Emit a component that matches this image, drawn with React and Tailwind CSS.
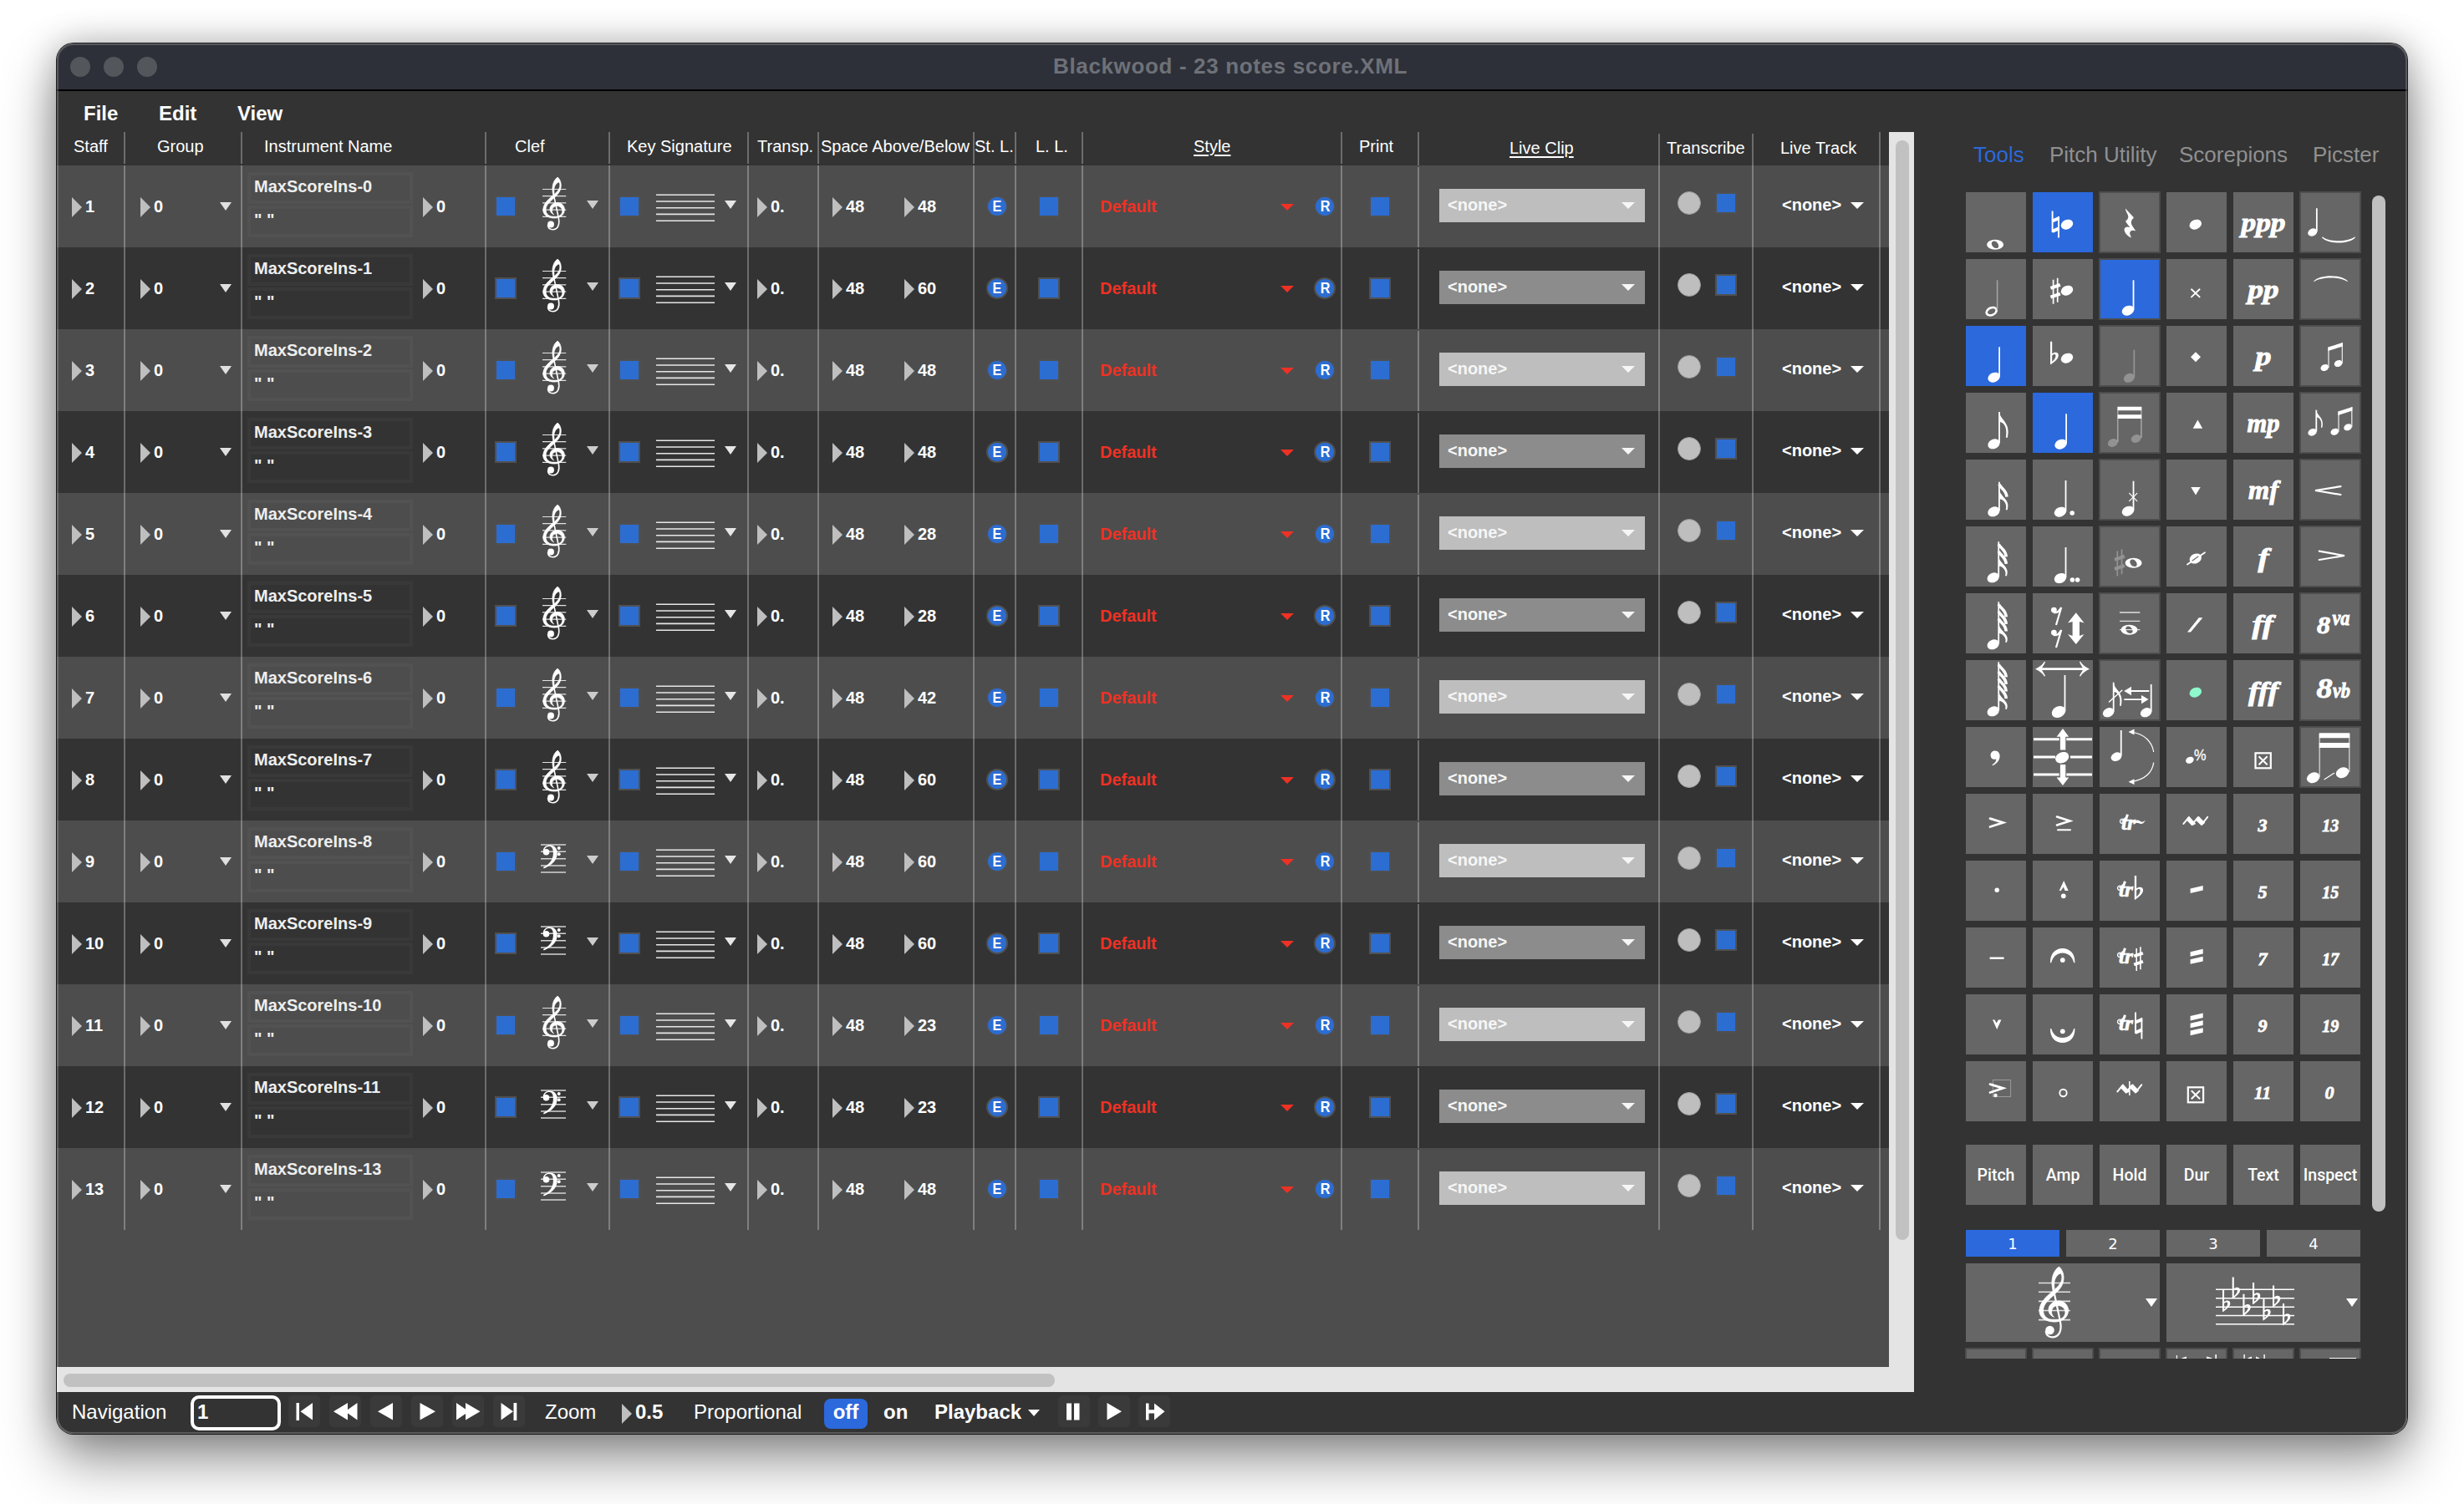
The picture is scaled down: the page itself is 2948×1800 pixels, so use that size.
import React from "react";

/* ---------- table pieces ---------- */

const COLS =
  "grid grid-cols-[80px_140px_292px_148px_166px_84px_186px_50px_80px_310px_92px_288px_112px_152px_12px]";

const Tri = ({ className = "" }) => (
  <svg viewBox="0 0 12 24" className={"h-6 w-3 shrink-0 " + className}>
    <path d="M0 0L12 12L0 24Z" fill="#bfbfbf" />
  </svg>
);

const Down = ({ className = "", w = 14, h = 10 }) => (
  <svg viewBox={`0 0 ${w} ${h}`} width={w} height={h} className={"shrink-0 " + className}>
    <path d={`M0 0H${w}L${w / 2} ${h}Z`} fill="currentColor" />
  </svg>
);

const Num = ({ className = "", children }) => (
  <span className={"shrink-0 whitespace-nowrap text-[20px]/[20px] font-bold " + className}>{children}</span>
);

const Cell = ({ first, lineClass = "h-full", children }) => (
  <div className="flex h-full items-start">
    {!first && <div className={"w-[2px] shrink-0 bg-white/28 " + lineClass} />}
    {children}
  </div>
);

const Box = ({ className = "" }) => (
  <div className={"size-[26px] shrink-0 border-2 border-[#505050] bg-[#2c6dd2] " + className} />
);

const Badge = ({ className = "", children }) => (
  <div
    className={
      "flex size-[26px] shrink-0 items-center justify-center rounded-full border-2 border-[#505050] bg-[#2c6dd2] text-[18px]/[20px] font-bold " +
      className
    }
  >
    <span className="scale-x-90">{children}</span>
  </div>
);

const TREBLE =
  "M17.2 29C9 36 1 43 1 53C1 61 9 66 19 66C29 66 35.5 60.5 35.5 52C35.5 45.5 30 41 24 41C17 41 12 46 12 51.5C12 56 15 59 18.5 60.3C16 58 15.5 56 15.5 54C15.5 49.5 19 46.5 23 46.5C27.5 46.5 32 49.5 32 54.5C32 60.5 26 64 20 64C11 64 5.5 59.5 5.5 52.5C5.5 46 10 41.5 17 35C24 28.5 30 23 30 13C30 8 28 3 24.5 0C18.5 4 16 12 16 19C16 23 16.6 26 17.2 29ZM26.5 8C22 9 18.6 15 18.6 21C18.6 23.5 18.8 25.5 19.2 27.5C24 23 28 19 28 13C28 10.5 27.5 9 26.5 8Z";

const Treble = ({ w, h, className = "" }) => (
  <svg viewBox="0 0 39 86" width={w} height={h} className={"shrink-0 " + className} fill="#fff">
    <path d="M0 19.5H38M0 30.3H38M0 41.4H38M0 52.5H38M0 63.6H38" stroke="#e2e2e2" strokeWidth="1.6" />
    <path d={TREBLE} fillRule="evenodd" stroke="#fff" strokeWidth="0.9" />
    <path d="M18 28L26 66C28 76 25 84 17 84.3C12 84.4 9 81.5 8.7 77" fill="none" stroke="#fff" strokeWidth="2.2" />
    <circle cx="13.5" cy="76" r="5.3" />
  </svg>
);

const Bass = ({ className = "" }) => (
  <svg viewBox="0 0 30 36" width="30" height="36" className={"shrink-0 " + className} fill="#fff">
    <path d="M0 1H30M0 9.3H30M0 17.7H30M0 26H30M0 34H30" stroke="#d4d4d4" strokeWidth="1.5" />
    <circle cx="6.5" cy="9.7" r="3.8" />
    <path d="M2.7 9C2.7 4 6.5 1.5 11 1.5C16.5 1.5 19.7 5.5 19.7 11C19.7 20 12.5 26 3.6 29.4L3 28C10 24.5 14.9 19 14.9 11C14.9 6 13.5 3 10.3 3C7 3 4.6 5 4.2 8.5Z" />
    <circle cx="21.7" cy="5" r="2" />
    <circle cx="21.7" cy="12.3" r="2" />
  </svg>
);

const Staff5 = ({ className = "" }) => (
  <svg viewBox="0 0 70 34" width="70" height="34" className={"shrink-0 " + className}>
    <path d="M0 1.2H70M0 9H70M0 16.7H70M0 24.4H70M0 32.2H70" stroke="#e6e6e6" strokeWidth="1.6" />
  </svg>
);

const Heading = ({ className, children }) => (
  <span className={"shrink-0 whitespace-nowrap text-[20px]/[20px] " + className}>{children}</span>
);

const HL = "h-[38px]";

const Header = () => (
  <div className={COLS + " h-10"}>
    <Cell first><Heading className="ml-[20px] mt-[7px]">Staff</Heading></Cell>
    <Cell lineClass={HL}><Heading className="ml-[38px] mt-[7px]">Group</Heading></Cell>
    <Cell lineClass={HL}><Heading className="ml-[26px] mt-[7px]">Instrument Name</Heading></Cell>
    <Cell lineClass={HL}><Heading className="ml-[34px] mt-[7px]">Clef</Heading></Cell>
    <Cell lineClass={HL}><Heading className="ml-[20px] mt-[7px]">Key Signature</Heading></Cell>
    <Cell lineClass={HL}><Heading className="ml-[10px] mt-[7px]">Transp.</Heading></Cell>
    <Cell lineClass={HL}><Heading className="ml-[2px] mt-[7px]">Space Above/Below</Heading></Cell>
    <Cell lineClass={HL}><Heading className="mt-[7px]">St. L.</Heading></Cell>
    <Cell lineClass={HL}><Heading className="ml-[23px] mt-[7px]">L. L.</Heading></Cell>
    <Cell lineClass={HL}><Heading className="ml-[132px] mt-[7px] underline underline-offset-[3px]">Style</Heading></Cell>
    <Cell lineClass={HL}><Heading className="ml-[20px] mt-[7px]">Print</Heading></Cell>
    <Cell><Heading className="ml-[108px] mt-[9px] underline underline-offset-[3px]">Live Clip</Heading></Cell>
    <Cell lineClass="mt-[2px] h-[38px]"><Heading className="ml-[8px] mt-[9px]">Transcribe</Heading></Cell>
    <Cell lineClass="mt-[2px] h-[38px]"><Heading className="ml-[32px] mt-[9px]">Live Track</Heading></Cell>
    <Cell />
  </div>
);

const ROWS = [
  ["48", "G"], ["60", "G"], ["48", "G"], ["48", "G"], ["28", "G"], ["28", "G"], ["42", "G"],
  ["60", "G"], ["60", "F"], ["60", "F"], ["23", "G"], ["23", "F"], ["48", "F"],
];

const NAMES = [0, 1, 2, 3, 4, 5, 6, 7, 8, 9, 10, 11, 13];

const Row = ({ i, below, clef, name }) => {
  const light = i % 2 === 0;
  const field = light ? "border-[#525252]" : "border-[#393939]";
  return (
    <div className={COLS + " h-[98px] " + (light ? "bg-[#4d4d4d]" : "bg-[#333]")}>
      <Cell first>
        <Tri className="ml-[18px] mt-[38px]" />
        <Num className="ml-[4px] mt-[39px]">{i + 1}</Num>
      </Cell>
      <Cell>
        <Tri className="ml-[18px] mt-[38px]" />
        <Num className="ml-[4px] mt-[39px] w-[79px]">0</Num>
        <Down className="mt-[44px] text-[#e0e0e0]" />
      </Cell>
      <Cell>
        <div className="ml-[6px] mt-[8px] flex w-[198px] shrink-0 flex-col gap-[2px] text-[#eee]">
          <div className={"h-[38px] border-4 pl-[4px] pt-[3px] " + field}><Num className="block">{name}</Num></div>
          <div className={"h-[38px] border-4 pl-[4px] pt-[3px] " + field}><Num className="block">{'" "'}</Num></div>
        </div>
        <Tri className="ml-[12px] mt-[38px]" />
        <Num className="ml-[4px] mt-[39px]">0</Num>
      </Cell>
      <Cell>
        <Box className="ml-[10px] mt-[36px]" />
        {clef === "G" ? (
          <Treble w={29} h={64} className="ml-[31px] mt-[14px]" />
        ) : (
          <Bass className="ml-[29px] mr-[1px] mt-[28px]" />
        )}
        <Down className="ml-[24px] mt-[42px] text-[#ccc]" />
      </Cell>
      <Cell>
        <Box className="ml-[10px] mt-[36px]" />
        <Staff5 className="ml-[19px] mt-[34px]" />
        <Down className="ml-[12px] mt-[42px] text-[#e6e6e6]" />
      </Cell>
      <Cell>
        <Tri className="ml-[10px] mt-[38px]" />
        <Num className="ml-[4px] mt-[39px]">0.</Num>
      </Cell>
      <Cell>
        <Tri className="ml-[16px] mt-[38px]" />
        <Num className="ml-[4px] mt-[39px] w-[70px]">48</Num>
        <Tri className="mt-[38px]" />
        <Num className="ml-[4px] mt-[39px]">{below}</Num>
      </Cell>
      <Cell><Badge className="ml-[14px] mt-[36px]">E</Badge></Cell>
      <Cell><Box className="ml-[26px] mt-[36px]" /></Cell>
      <Cell>
        <Num className="ml-[20px] mt-[39px] w-[216px] text-[#ee3124]">Default</Num>
        <Down w={16} h={8} className="mt-[46px] text-[#ee3124]" />
        <Badge className="ml-[24px] mt-[36px]">R</Badge>
      </Cell>
      <Cell><Box className="ml-[32px] mt-[36px]" /></Cell>
      <Cell lineClass="mt-[2px] h-[96px]">
        <div
          className={
            "ml-[24px] mt-[28px] flex h-10 w-[246px] shrink-0 items-start justify-between pl-[10px] pr-[12px] text-[#f6f6f6] " +
            (light ? "bg-[#bebebe]" : "bg-[#8c8c8c]")
          }
        >
          <Num className="mt-[9px]">{"<none>"}</Num>
          <Down w={16} h={8} className="mt-[16px]" />
        </div>
      </Cell>
      <Cell>
        <div className="ml-[21px] mt-[31px] size-7 shrink-0 rounded-full border border-[#9a9a9a] bg-[#bebebe]" />
        <Box className="ml-[17px] mt-[32px]" />
      </Cell>
      <Cell>
        <Num className="ml-[34px] mt-[37px] w-[82px]">{"<none>"}</Num>
        <Down w={16} h={8} className="mt-[44px]" />
      </Cell>
      <Cell />
    </div>
  );
};

/* ---------- notation drawings, 72 x 72 tiles ---------- */

const Head = ({ x, y, r = 7.5, c = "#fff" }) => (
  <ellipse cx={x} cy={y} rx={r} ry={r * 0.76} fill={c} transform={`rotate(-25 ${x} ${y})`} />
);
const Stem = ({ x, y1, y2, c = "#fff", w = 1.8 }) => (
  <path d={`M${x} ${y1}V${y2}`} stroke={c} strokeWidth={w} />
);
const Quarter = ({ x = 33.6, y = 61.7, top = 25.3, c = "#fff", r = 7.5 }) => (
  <g>
    <Head x={x} y={y} r={r} c={c} />
    <Stem x={x + r * 0.87} y1={top} y2={y - 1} c={c} />
  </g>
);
const Whole = ({ x, y }) => (
  <path
    fillRule="evenodd"
    fill="#fff"
    d={`M${x - 10} ${y}a10 6 0 1 0 20 0a10 6 0 1 0 -20 0ZM${x - 4} ${y - 2.6}C${x - 2.5} ${y - 5.6} ${x + 2.5} ${y - 4.6} ${x + 4} ${y + 0.5}C${x + 5} ${y + 4.8} ${x + 0.5} ${y + 5.2} ${x - 2} ${y + 3.2}C${x - 4.2} ${y + 1.2} ${x - 4.8} ${y - 1} ${x - 4} ${y - 2.6}Z`}
  />
);
const Sharp = ({ x, y, c = "#fff", s = 1 }) => (
  <g transform={`translate(${x} ${y}) scale(${s})`} stroke={c} fill="none">
    <path d="M3.2 2V31M8.3 0V29" strokeWidth="1.7" />
    <path d="M0 12L11.5 8M0 22.8L11.5 18.8" strokeWidth="4" />
  </g>
);
const Natural = ({ x, y }) => (
  <g transform={`translate(${x} ${y})`} stroke="#fff" fill="none">
    <path d="M1.2 0V25.5M8.6 6.5V32" strokeWidth="1.9" />
    <path d="M1 12L9 8.6M1 24.3L9 20.9" strokeWidth="4" />
  </g>
);
const Flat = ({ x, y, s = 1 }) => (
  <path
    transform={`translate(${x} ${y}) scale(${s})`}
    fill="#fff"
    fillRule="evenodd"
    d="M0 0H2.2V14.6C4 12.6 9.8 11.8 9.8 16.5C9.8 21 5 24 0.6 27.6L0 27ZM2.2 16.8V24C5 21.6 6.5 19.5 6.5 17C6.5 14.6 3.8 14.8 2.2 16.8Z"
  />
);
const FlagNote = ({ x = 32.7, y = 61.3, top, n, r = 7.5, end }) => {
  const sx = x + r * 0.87;
  const k2 = r / 7.5;
  const flags = [];
  for (let k = 0; k < n; k++) {
    const t = top + k * 8.6;
    flags.push(
      k === n - 1 ? (
        <path
          key={k}
          fill="#fff"
          d={`M${sx} ${t}C${sx + 1 * k2} ${t + 10 * k2} ${sx + 14 * k2} ${t + 12 * k2} ${sx + 9.7 * k2} ${end}L${sx + 7.8 * k2} ${end - 0.5}C${sx + 10 * k2} ${t + 18 * k2} ${sx + 5 * k2} ${t + 12 * k2} ${sx} ${t + 12 * k2}Z`}
        />
      ) : (
        <path
          key={k}
          fill="none"
          stroke="#fff"
          strokeWidth="3.6"
          d={`M${sx} ${t + 3}C${sx + 2} ${t + 8} ${sx + 8.6} ${t + 9.5} ${sx + 9} ${t + 18}`}
        />
      )
    );
  }
  return (
    <g>
      <Quarter x={x} y={y} top={top} r={r} />
      {flags}
    </g>
  );
};
const Beam = ({ x1, y1, x2, y2, h1, h2, r = 5 }) => (
  <g>
    <Head x={x1 - r + 0.3} y={h1} r={r} />
    <Head x={x2 - r + 0.3} y={h2} r={r} />
    <path d={`M${x1} ${y1}V${h1}M${x2} ${y2}V${h2}`} stroke="#eee" strokeWidth="1.2" />
    <path d={`M${x1 - 0.6} ${y1}L${x2 + 0.6} ${y2}V${y2 + 4.6}L${x1 - 0.6} ${y1 + 4.6}Z`} fill="#fff" />
  </g>
);
const Dyn = ({ children, w, y = 46.6, size = 31, x = 36, sw = 0.9 }) => (
  <text
    x={x}
    y={y}
    textAnchor="middle"
    textLength={w}
    lengthAdjust="spacingAndGlyphs"
    fontFamily="'Liberation Serif', serif"
    fontWeight="bold"
    fontStyle="italic"
    fontSize={size}
    fill="#fff"
    stroke="#fff"
    strokeWidth={sw}
  >
    {children}
  </text>
);
const Tup = ({ children, x = 35 }) => (
  <Dyn x={x} y={45} size={21.5} w={String(children).length > 1 ? 20 : 11} sw={0.8}>{children}</Dyn>
);
const Tr = ({ x = 21 }) => (
  <g>
    <text x={x + 2} y="43.4" fontFamily="'Liberation Serif', serif" fontWeight="bold" fontStyle="italic" fontSize="26" fill="#fff" stroke="#fff" strokeWidth="0.7" textLength="17" lengthAdjust="spacingAndGlyphs">tr</text>
    <path d={`M${x + 9} 33C${x + 5} 28.5 ${x} 29.5 ${x + 0.6} 33.5C${x + 1.5} 36.4 ${x + 5} 35.4 ${x + 4} 33`} fill="none" stroke="#fff" strokeWidth="1.3" />
    <path d={`M${x + 9.5} 24.8L${x + 7} 32`} stroke="#fff" strokeWidth="3" />
  </g>
);
const Bars = ({ ys }) => <path fill="#fff" d={ys.map((y) => `M28.6 ${y + 3.4}L43.7 ${y}V${y + 5.6}L28.6 ${y + 9}Z`).join("")} />;
const L = ({ d, w = 2, c = "#fff" }) => <path d={d} fill="none" stroke={c} strokeWidth={w} strokeLinecap="round" />;
const F = ({ d, c = "#fff" }) => <path d={d} fill={c} />;
const XBox = ({ x, y }) => (
  <g fill="none" stroke="#fff">
    <rect x={x + 1} y={y + 1} width="18.3" height="18" strokeWidth="2.2" />
    <path d={`M${x + 5} ${y + 5}L${x + 15.2} ${y + 15}M${x + 15.2} ${y + 5}L${x + 5} ${y + 15}`} strokeWidth="2" />
  </g>
);
const Mord = ({ x = 19.6, y = 26.7 }) => (
  <g transform={`translate(${x} ${y})`}>
    <path d="M0.8 9.2L7 1.6M12 9L18 1.6M23 9.5L29.6 1.2" fill="none" stroke="#fff" strokeWidth="2" strokeLinecap="round" />
    <path d="M7.4 0L15.6 9.2L10.8 11.5L4 4.4ZM19 0L26.6 8L22.4 11.5L15 4.6Z" fill="#fff" />
  </g>
);
const Rest8 = ({ x, y }) => (
  <g>
    <circle cx={x + 3.4} cy={y + 3.6} r="3.4" fill="#fff" />
    <path d={`M${x + 3} ${y + 6.4}C${x + 8} ${y + 7.6} ${x + 10} ${y + 4} ${x + 12.2} ${y + 0.5}L${x + 6} ${y + 21.5}`} fill="none" stroke="#fff" strokeWidth="2.2" />
  </g>
);

const TILES = [
  // row 1
  <Whole x={35.1} y={62.7} />,
  <g><Natural x={22.4} y={22.5} /><Head x={41} y={38.7} /></g>,
  <F d="M31 19.5C34 23 38 27 41 30.5C37.5 33.5 37 36.5 39 40C40.5 42.5 42 44.5 43.3 46.3C38 44.5 35.5 47 36.3 50C36.7 51.8 37.5 53.3 38 54.5C33 52.5 29.3 48 29.6 44.3C30 41.3 33.5 40.8 36.5 42C34 39.5 32.3 37 31 34.8C34.5 32 35 29.5 33.5 26.5C32.5 24.5 31 22 31 19.5Z" />,
  <Head x={34.8} y={38.7} />,
  <Dyn w={53}>ppp</Dyn>,
  <g><Quarter x={14.8} y={48} top={19.3} r={5.8} /><F d="M26.5 53.3C34 60 57 60 65.4 53.3L65.8 54.5C58 62.5 34 62.5 26.1 54.5Z" /></g>,
  // row 2
  <g><ellipse cx="30.7" cy="62.7" rx="6.3" ry="4.3" fill="none" stroke="#fff" strokeWidth="2.6" transform="rotate(-25 30.7 62.7)" /><Stem x={37.6} y1={25.3} y2={61} c="#a6a6a6" w={1.5} /></g>,
  <g><Sharp x={21.4} y={22.8} /><Head x={41} y={37.7} /></g>,
  <Quarter x={34} />,
  <L d="M30 36.3L39.6 45.4M39.6 36.3L30 45.4" w={1.9} />,
  <Dyn w={37}>pp</Dyn>,
  <F d="M16 26.5C24 18 49 18 57.2 26.5L56.4 27C48 21 25 21 16.8 27Z" />,
  // row 3
  <Quarter />,
  <g><Flat x={21} y={18.7} /><Head x={41} y={38.7} /></g>,
  <Quarter x={35.4} y={62.3} top={28.7} r={6.8} c="#929292" />,
  <F d="M35 31.3L41 37.3L35 43.3L29 37.3Z" />,
  <Dyn w={19}>p</Dyn>,
  <Beam x1={34} y1={25.4} x2={50.3} y2={20} h1={50} h2={45} />,
  // row 4
  <FlagNote x={33.5} top={23} n={1} end={54} />,
  <Quarter x={33.6} />,
  <g>
    <Head x={15.8} y={60} r={6.2} c="#929292" /><Head x={43.7} y={55} r={6.2} c="#929292" />
    <path d="M21.8 17V59M49.9 17V54" stroke="#b4b4b4" strokeWidth="1.2" />
    <F d="M21.6 16.7H50.2V21.2H21.6ZM21.6 26.2H50.2V31H21.6Z" />
  </g>,
  <F d="M31.7 42.7H43.2L37.4 32.6Z" />,
  <Dyn w={39}>mp</Dyn>,
  <g><FlagNote x={14.6} y={47.3} top={20.7} n={1} r={5.4} end={42} /><Beam x1={46} y1={22.4} x2={61.8} y2={16.9} h1={46.7} h2={41.3} /></g>,
  // row 5
  <FlagNote x={33.4} y={62.3} top={26.7} n={2} end={60.5} />,
  <g><Quarter x={33} y={62.7} top={25} /><circle cx="47.2" cy="64" r="2.8" fill="#fff" /></g>,
  <g><Quarter x={34} top={25.7} /><L d="M35.6 40.4L44.8 49.6M44.8 40.4L35.6 49.6" w={1.2} /></g>,
  <F d="M29.3 33H40.7L35 42.5Z" />,
  <Dyn w={36}>mf</Dyn>,
  <L d="M48.4 32.2L18 37L48.4 42" w={2.2} />,
  // row 6
  <FlagNote top={18.3} n={3} end={59.5} />,
  <g><Quarter x={33} y={62} top={25} /><circle cx="47.4" cy="64" r="2.8" fill="#fff" /><circle cx="53.6" cy="64" r="2.8" fill="#fff" /></g>,
  <g><Sharp x={18} y={27.5} c="#929292" s={1.03} /><Whole x={40.6} y={43.7} /></g>,
  <g><Head x={34.8} y={38.5} /><L d="M25 45.5L46 31.2" w={1.8} /><L d="M31 41L38 36" w={1.1} c="#666" /></g>,
  <Dyn w={13} y={47.5}>f</Dyn>,
  <L d="M22.8 29.6L53 35L22.8 40" w={2.2} />,
  // row 7
  <FlagNote top={10.3} n={4} end={59} />,
  <g><Rest8 x={22} y={16.5} /><Rest8 x={22} y={43.5} /><F d="M51.8 23.3L61.5 35.5L56 34V51L61.5 49L51.8 61L42 49L47.6 51V34L42 35.5Z" /></g>,
  <g><path d="M24 23H48.3M24 33.4H48.3M24 43.7H48.3" stroke="#e0e0e0" strokeWidth="1.3" /><Whole x={35.5} y={43.7} /></g>,
  <F d="M25 46.5L38.8 29.2H43.4L29 46.5Z" />,
  <Dyn w={25} y={47.5} x={35}>ff</Dyn>,
  <g><Dyn x={28} y={48} w={16} size={30}>8</Dyn><Dyn x={49} y={37.8} w={21} size={25}>va</Dyn></g>,
  // row 8
  <FlagNote top={2.3} n={5} end={59} />,
  <g>
    <Quarter x={31} y={62} top={18} r={8.6} />
    <path d="M6 10.7H65" stroke="#fff" strokeWidth="2.8" />
    <F d="M3 10.7C8 8.5 12 5.5 14 1.6L15 2.6C13.5 6 11.5 8.5 10.5 10.7C11.5 13 13.5 15.5 15 18.8L14 19.8C12 15.9 8 12.9 3 10.7ZM68 10.7C63 8.5 59 5.5 57 1.6L56 2.6C57.5 6 59.5 8.5 60.5 10.7C59.5 13 57.5 15.5 56 18.8L57 19.8C59 15.9 63 12.9 68 10.7Z" />
  </g>,
  <g>
    <FlagNote x={10.6} y={62.7} top={26.7} n={1} r={7} end={55} />
    <Quarter x={55.6} y={62.7} top={29} r={7} />
    <L d="M11.5 50L26.8 36.2" w={1.5} />
    <path d="M36 37H59.3M29.3 47.1H52" stroke="#fff" strokeWidth="1.8" />
    <F d="M29.3 37L38 31.8V42.2ZM58.6 47.1L50 41.9V52.3Z" />
  </g>,
  <Head x={34.8} y={38.7} c="#8ff8cd" />,
  <Dyn w={36} y={47.5}>fff</Dyn>,
  <g><Dyn x={29} y={45} w={19} size={33}>8</Dyn><Dyn x={49.5} y={45} w={21} size={25}>vb</Dyn></g>,
  // row 9
  <F d="M34.8 28.6C38.5 28.6 40.8 31.5 40.6 35.3C40.3 40.5 36.5 44.5 32 46.3L31.5 45.3C34.5 43.3 36.3 41 36.4 38.4C32.5 40 29.6 37.3 29.6 34C29.6 30.8 31.9 28.6 34.8 28.6Z" />,
  <g>
    <path d="M1 14.8H71M1 36H27M45 36H71M1 57H71" stroke="#fff" strokeWidth="3" />
    <path d="M36 1V28M36 44V71" stroke="#666" strokeWidth="8.6" />
    <F d="M36 2L43.2 11.8H39.3V27.4H32.9V11.8H28.6ZM36 70L43.2 60.4H39.3V45H32.9V60.4H28.6Z" />
    <Head x={35.2} y={36.7} r={8.4} />
  </g>,
  <g>
    <Quarter x={20} y={35.7} top={4} r={6.6} />
    <path d="M64.7 30C63 18 54 8.5 38 6M64.7 42.7C63 55 54 63 38 65.7" fill="none" stroke="#fff" strokeWidth="1.2" />
    <F d="M34.5 6L41.5 2.6V9.6ZM34.5 65.7L41.5 62.2V69Z" />
  </g>,
  <g><Head x={27.9} y={39.7} r={5} /><text x="33" y="40" fontFamily="'Liberation Sans', sans-serif" fontSize="18" fill="#fff" stroke="#fff" strokeWidth="0.3" textLength="14.5" lengthAdjust="spacingAndGlyphs">%</text></g>,
  <XBox x={25.5} y={30.3} />,
  <g>
    <Head x={15.6} y={60.7} r={8} /><Head x={50.5} y={54.7} r={8} />
    <path d="M23.2 8V60M58.8 8V54" stroke="#ddd" strokeWidth="1.2" />
    <F d="M22.8 7.2H59.2V13.2H22.8ZM22.8 19H59.2V25H22.8Z" />
    <L d="M29 62.7L40.6 55.3" w={1.2} />
  </g>,
  // row 10
  <L d="M29 29.7L44.5 34.5L29 39.5" w={2.8} />,
  <g><L d="M29 27.6L44.5 32.5L29 37.5" w={2.6} /><L d="M30 43.2H45" w={2} /></g>,
  <g><Tr x={24} /><F d="M40 34.5C44 30.5 46 31 49 33C51 34.3 52.5 33.5 54.8 31.5C53 35.8 50 36.8 47 35.3C44.5 34 43 34.8 41 37Z" /></g>,
  <Mord />,
  <Tup>3</Tup>,
  <Tup x={36.3}>13</Tup>,
  // row 11
  <circle cx="37.2" cy="35.3" r="2.7" fill="#fff" />,
  <g><F d="M37.2 24L42.7 36H38.6L36.8 31.5L33.8 36H31.7Z" /><circle cx="36.8" cy="42.3" r="2.9" fill="#fff" /></g>,
  <g><Tr /><Flat x={41.8} y={18} s={1.05} /></g>,
  <Bars ys={[30]} />,
  <Tup>5</Tup>,
  <Tup x={36.3}>15</Tup>,
  // row 12
  <path d="M28.6 36.7H45.6" stroke="#fff" strokeWidth="2.4" />,
  <g><F d="M21 42.3C20.5 31.5 27 25 35.7 25C44.4 25 51 31.5 50.4 42.3H49.2C47.5 35.5 43 30.5 35.7 30.5C28.5 30.5 24 35.5 22.2 42.3Z" /><circle cx="35.8" cy="39.1" r="2.9" fill="#fff" /></g>,
  <g><Tr /><Sharp x={41.2} y={23.2} s={0.93} /></g>,
  <Bars ys={[25.8, 34.8]} />,
  <Tup>7</Tup>,
  <Tup x={36.3}>17</Tup>,
  // row 13
  <F d="M32 30.5H34.5L36.5 34.5L39 30.5H42.4L37.2 42Z" />,
  <g><F d="M21 41C20.5 51.5 27 58 35.7 58C44.4 58 51 51.5 50.4 41H49.2C47.5 47.5 43 52 35.7 52C28.5 52 24 47.5 22.2 41Z" /><circle cx="35.8" cy="44.3" r="2.9" fill="#fff" /></g>,
  <g><Tr /><Natural x={41.8} y={21.5} /></g>,
  <Bars ys={[22.5, 31.3, 40.2]} />,
  <Tup>9</Tup>,
  <Tup x={36.3}>19</Tup>,
  // row 14
  <g><rect x="32.4" y="22.5" width="21.2" height="20" fill="none" stroke="#9a9a9a" strokeWidth="1" /><L d="M29 27.6L44.5 32.4L29 37.5" w={2.8} /><circle cx="35.5" cy="41" r="2.2" fill="#fff" /></g>,
  <circle cx="36.5" cy="38" r="4.2" fill="none" stroke="#fff" strokeWidth="1.9" />,
  <g><Mord x={20.6} y={27.2} /><Stem x={35.8} y1={24} y2={41} w={1.6} /></g>,
  <XBox x={24.8} y={30.3} />,
  <Tup>11</Tup>,
  <Tup x={35}>0</Tup>,
];

const ACTIVE = [1, 8, 12, 19];
const EDGED = [2, 5, 8, 11, 14, 17, 20, 23, 26, 29, 32, 35, 38, 41, 44, 47, 53];
const EDGE = "shadow-[0_0_0_1px_#4b4b4b,inset_0_0_0_1px_#4f4f4f]";

const Tile = ({ i, children }) => (
  <div
    className={
      "size-[72px] " +
      (ACTIVE.includes(i) ? "bg-[#2b69dc] " : "bg-[#666] ") +
      (EDGED.includes(i) ? EDGE : "")
    }
  >
    <svg viewBox="0 0 72 72" width="72" height="72">{children}</svg>
  </div>
);

const FLATS = [[9, 50.1], [20.7, 34.4], [33.4, 54.7], [45, 41], [57.4, 60.4], [69, 44.4], [81, 66]];

const Palette = () => (
  <div className="flex flex-col pl-[62px]">
    <div className="mt-[63px] flex h-[26px] items-center text-[26px]/[26px] text-[#909090]">
      <span className="ml-[9px] w-[91px] text-[#2b69dc]">Tools</span>
      <span className="w-[155px] whitespace-nowrap">Pitch Utility</span>
      <span className="w-[160px]">Scorepions</span>
      <span>Picster</span>
    </div>
    <div className="mt-[32px] flex">
      <div className="flex w-[473px] flex-col">
        <div className="grid grid-cols-[repeat(6,72px)] gap-2">
          {TILES.map((t, i) => (
            <Tile key={i} i={i}>{t}</Tile>
          ))}
        </div>
        <div className="mt-[28px] grid grid-cols-[repeat(6,72px)] gap-2 font-[family-name:Roboto] text-[19.5px]/[20px] font-medium">
          {["Pitch", "Amp", "Hold", "Dur", "Text", "Inspect"].map((t) => (
            <div key={t} className="flex h-[72px] items-center justify-center bg-[#666] pt-[2px]">{t}</div>
          ))}
        </div>
        <div className="mt-[30px] grid grid-cols-[repeat(4,112px)] gap-2 font-['DejaVu_Sans'] text-[18px]/[18px]">
          {["1", "2", "3", "4"].map((t, i) => (
            <div key={t} className={"flex h-8 items-center justify-center pt-[2px] " + (i === 0 ? "bg-[#2b69dc]" : "bg-[#666]")}>{t}</div>
          ))}
        </div>
        <div className="mt-2 flex gap-2">
          <div className="flex h-[94px] w-[232px] items-start bg-[#666]">
            <Treble w={39} h={86} className="ml-[87px] mt-[4px]" />
            <Down className="ml-[89px] mt-[42px]" />
          </div>
          <div className="flex h-[94px] w-[232px] items-start bg-[#666]">
            <svg viewBox="0 0 94 70" width="94" height="70" className="ml-[59px] mt-[12px]">
              <path d="M0 19.3H94M0 29.8H94M0 40.2H94M0 50.5H94M0 60.8H94" stroke="#fff" strokeWidth="1.5" />
              {FLATS.map(([x, y]) => (
                <Flat key={x} x={x - 1} y={y - 30} s={0.95} />
              ))}
            </svg>
            <Down className="ml-[62px] mt-[42px]" />
          </div>
        </div>
        <div className="mt-[6px] grid h-[14px] grid-cols-[repeat(6,72px)] gap-2 overflow-hidden pt-[2px] -ml-px pl-px">
          {[0, 1, 2, 3, 4, 5].map((i) => (
            <div key={i} className={"h-[72px] bg-[#666] " + EDGE}>
              <svg viewBox="0 0 72 72" width="72" height="72" fill="#fff">
                {i === 3 && <path d="M11.8 8V20H13V8ZM18 11.5L24 9.5V14ZM55 11.5L48 9.5V14ZM58.4 7V20H60V7Z" />}
                {i === 4 && <path d="M12.4 7V20H13.8V7ZM17 11.5L22 9.5V14ZM31.5 11.5L27 9.5V14ZM36.4 7V20H37.8V7Z" />}
                {i === 5 && <path d="M35 11H67V13H35Z" />}
              </svg>
            </div>
          ))}
        </div>
      </div>
      <div className="ml-[13px] mt-[4px] h-[1216px] w-4 rounded-full bg-[#c0c0c0]" />
    </div>
  </div>
);

/* ---------- transport ---------- */

const Btn = ({ className = "", children }) => (
  <div className={"size-[38px] shrink-0 rounded-[5px] bg-[#3a3a3a] " + className}>
    <svg viewBox="0 0 38 38" className="size-full" fill="#fff">{children}</svg>
  </div>
);

const Txt = ({ className = "", children }) => (
  <span className={"mt-[12px] shrink-0 whitespace-nowrap text-[24px]/[24px] " + className}>{children}</span>
);

const Transport = () => (
  <div className="flex h-[50px] items-start">
    <Txt className="ml-[18px] w-[142px]">Navigation</Txt>
    <div className="mt-[4px] h-[42px] w-[108px] shrink-0 rounded-[10px] border-4 border-white pl-[4px] pt-[4px] text-[24px]/[24px] font-bold">1</div>
    <div className="ml-[9px] mt-[4px] flex gap-[11px]">
      <Btn><path d="M9.5 9H13V30H9.5ZM29 9V29.5L14.5 19.2Z" /></Btn>
      <Btn><path d="M22 9V29.5L5 19.2ZM33.5 9V29.5L19 19.2Z" /></Btn>
      <Btn><path d="M27 9V29.5L9 19.2Z" /></Btn>
      <Btn><path d="M10.5 9V29.5L29 19.2Z" /></Btn>
      <Btn><path d="M5 9V29.5L20 19.2ZM16 9V29.5L33.5 19.2Z" /></Btn>
      <Btn><path d="M9.5 9V29.5L24 19.2ZM24.5 9H28.3V30H24.5Z" /></Btn>
    </div>
    <Txt className="ml-[24px] w-[92px]">Zoom</Txt>
    <Tri className="mt-[14px]" />
    <Txt className="ml-[4px] w-[70px] font-bold">0.5</Txt>
    <Txt className="w-[156px]">Proportional</Txt>
    <div className="mt-[8px] h-9 w-[52px] shrink-0 rounded-[8px] bg-[#2b69dc] pt-[4px] text-center text-[24px]/[24px] font-bold">off</div>
    <Txt className="ml-[19px] w-[61px] font-bold">on</Txt>
    <Txt className="w-[112px] font-bold">Playback</Txt>
    <Down w={14} h={8} className="mt-[21px]" />
    <div className="ml-[22px] mt-[4px] flex gap-[10px]">
      <Btn><path d="M10 9.5H16V29.5H10ZM19 9.5H25.5V29.5H19Z" /></Btn>
      <Btn><path d="M10.5 9V29.5L28 19.2Z" /></Btn>
      <Btn><path d="M9 9.5H12.5V17.2H19V9.5L31.5 19.2L19 29.5V21.5H12.5V29.5H9Z" /></Btn>
    </div>
  </div>
);

/* ---------- window ---------- */

export default function App() {
  return (
    <div className="h-[1800px] w-[2948px] overflow-hidden bg-white pl-[68px] pt-[52px] font-['Liberation_Sans',Arial,sans-serif] text-white">
      <div className="relative h-[1664px] w-[2812px] rounded-[20px] shadow-[0_0_0_1px_rgba(0,0,0,0.85),0_32px_66px_rgba(0,0,0,0.42),0_0_40px_rgba(0,0,0,0.25)]">
        <div className="flex h-full flex-col overflow-hidden rounded-[20px] bg-[#333]">
          <div className="grid h-[57px] shrink-0 grid-cols-[1fr_auto_1fr] items-center border-b-2 border-black bg-[#2d3038]">
            <div className="flex gap-4 pl-[16px]">
              <div className="size-6 rounded-full bg-[#53565b]" />
              <div className="size-6 rounded-full bg-[#53565b]" />
              <div className="size-6 rounded-full bg-[#53565b]" />
            </div>
            <div className="-mt-[2px] pr-[4px] text-[26px]/[26px] font-bold tracking-[0.65px] text-[#6e7178]">Blackwood - 23 notes score.XML</div>
            <div />
          </div>
          <div className="flex min-h-0 flex-1">
            <div className="flex w-[2222px] shrink-0 flex-col">
              <div className="flex h-[49px] items-start pt-[15px] text-[24px]/[24px] font-bold">
                <span className="ml-[32px] w-[90px]">File</span>
                <span className="w-[94px]">Edit</span>
                <span>View</span>
              </div>
              <div className="flex h-[1478px]">
                <div className="flex w-[2192px] flex-col">
                  <Header />
                  {ROWS.map(([below, clef], i) => (
                    <Row key={i} i={i} below={below} clef={clef} name={"MaxScoreIns-" + NAMES[i]} />
                  ))}
                  <div className="flex-1 bg-[#4d4d4d]" />
                </div>
                <div className="w-[30px] bg-[#e4e4e4] px-[7px] pt-[10px]">
                  <div className="ml-px h-[1316px] w-4 rounded-full bg-[#c1c1c1]" />
                </div>
              </div>
              <div className="h-[30px] bg-[#e4e4e4] pl-[8px] pt-[8px]">
                <div className="h-4 w-[1186px] rounded-full bg-[#c1c1c1]" />
              </div>
              <Transport />
            </div>
            <Palette />
          </div>
        </div>
        <div className="pointer-events-none absolute inset-0 rounded-[20px] border-2 border-white/20" />
      </div>
    </div>
  );
}
